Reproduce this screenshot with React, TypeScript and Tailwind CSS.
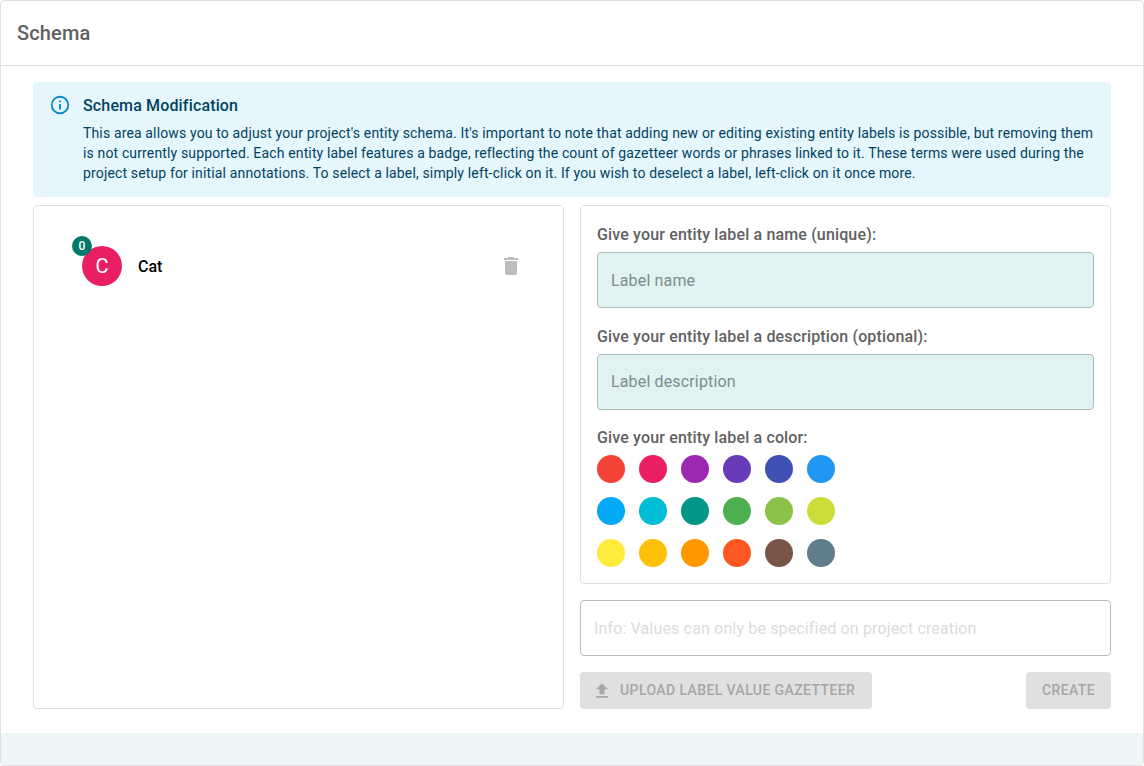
import React from "react";

const swatches = [
  "#f44336", "#e91e63", "#9c27b0", "#673ab7", "#3f51b5", "#2196f3",
  "#03a9f4", "#00bcd4", "#009688", "#4caf50", "#8bc34a", "#cddc39",
  "#ffeb3b", "#ffc107", "#ff9800", "#ff5722", "#795548", "#607d8b",
];

function Swatch({ color }: { color: string }) {
  return <div className="w-7 h-7 rounded-full" style={{ backgroundColor: color }} />;
}

function FieldLabel({ children }: { children: React.ReactNode }) {
  return <div className="h-[21px] mb-[7px] text-[16px] leading-[21px] font-medium tracking-[0.15px] text-[#616161]">{children}</div>;
}

export default function App() {
  return (
    <div className="w-[1144px] h-[766px] bg-white border border-[#e0e0e0] rounded flex flex-col overflow-hidden font-['Roboto',sans-serif]">
      <header className="h-[65px] shrink-0 border-b border-[#e0e0e0] flex items-center px-4">
        <h1 className="text-[20px] font-medium tracking-[0.15px] text-[#616161]">Schema</h1>
      </header>

      <main className="flex-1 flex flex-col gap-2 px-8 pt-4">
        <div className="h-[115px] shrink-0 rounded bg-[#e5f6fd] text-[#014361] flex px-4">
          <svg viewBox="0 0 24 24" className="w-[22px] h-[22px] mt-[12px] mr-3 shrink-0 fill-[#0288d1]">
            <path d="M11,9H13V7H11M12,20C7.59,20 4,16.41 4,12C4,7.59 7.59,4 12,4C16.41,4 20,7.59 20,12C20,16.41 16.41,20 12,20M12,2A10,10 0 0,0 2,12A10,10 0 0,0 12,22A10,10 0 0,0 22,12A10,10 0 0,0 12,2M11,17H13V11H11V17Z" />
          </svg>
          <div className="pt-3">
            <div className="text-[16px] leading-6 font-medium tracking-[0.15px] mb-[5px]">Schema Modification</div>
            <p className="text-[14px] leading-5 tracking-[0.145px]">
              This area allows you to adjust your project's entity schema. It's important to note that adding new or editing existing entity labels is possible, but removing them is not currently supported. Each entity label features a badge, reflecting the count of gazetteer words or phrases linked to it. These terms were used during the project setup for initial annotations. To select a label, simply left-click on it. If you wish to deselect a label, left-click on it once more.
            </p>
          </div>
        </div>

        <div className="grid grid-cols-2 gap-4">
          <section className="h-[504px] rounded border border-[#e0e0e0] pt-10 pl-12 pr-[40px]">
            <div className="flex items-center">
              <div className="relative w-10 h-10 rounded-full bg-[#e91e63] text-white text-[20px] flex items-center justify-center">
                C
                <span className="absolute -left-[10px] -top-[10px] w-5 h-5 pb-px rounded-full bg-[#00796b] text-white text-[12px] font-medium flex items-center justify-center">
                  0
                </span>
              </div>
              <span className="ml-4 pt-px text-[16px] font-medium text-black">Cat</span>
              <svg viewBox="0 0 24 24" className="w-6 h-6 ml-auto fill-[#bdbdbd]">
                <path d="M6 19c0 1.1.9 2 2 2h8c1.1 0 2-.9 2-2V7H6v12zM19 4h-3.5l-1-1h-5l-1 1H5v2h14V4z" />
              </svg>
            </div>
          </section>

          <section className="flex flex-col">
            <div className="h-[379px] rounded border border-[#e0e0e0] pt-[18px] px-4 flex flex-col gap-[18px]">
              <div className="flex flex-col">
                <FieldLabel>Give your entity label a name (unique):</FieldLabel>
                <div className="h-14 rounded border border-[#a9bfbd] bg-[#e0f2f1] flex items-center px-[13px] pt-px text-[16px] tracking-[0.15px] text-[#7f8c8b]">
                  Label name
                </div>
              </div>
              <div className="flex flex-col">
                <FieldLabel>Give your entity label a description (optional):</FieldLabel>
                <div className="h-14 rounded border border-[#a9bfbd] bg-[#e0f2f1] flex items-center px-[13px] text-[16px] tracking-[0.15px] text-[#7f8c8b]">
                  Label description
                </div>
              </div>
              <div className="-mt-[1px]">
                <FieldLabel>Give your entity label a color:</FieldLabel>
                <div className="grid grid-cols-[repeat(6,28px)] gap-x-[14px] gap-y-[14px]">
                  {swatches.map((c) => (
                    <Swatch key={c} color={c} />
                  ))}
                </div>
              </div>
            </div>

            <div className="h-14 mt-4 rounded border border-[#bdbdbd] flex items-center px-[13px] pt-px text-[16px] tracking-[0.15px] text-[#dcdcdc]">
              Info: Values can only be specified on project creation
            </div>

            <div className="flex justify-between mt-4">
              <div className="h-[37px] w-[292px] rounded bg-[#e0e0e0] text-[#a6a6a6] text-[14px] leading-[24.5px] font-medium tracking-[0.4px] flex items-center pl-3">
                <svg viewBox="0 0 24 24" className="w-5 h-5 mr-2 fill-[#a6a6a6]">
                  <path d="M9 16h6v-6h4l-7-7-7 7h4zm-4 2h14v2H5z" />
                </svg>
                UPLOAD LABEL VALUE GAZETTEER
              </div>
              <div className="h-[37px] w-[85px] rounded bg-[#e0e0e0] text-[#a6a6a6] text-[14px] leading-[24.5px] font-medium tracking-[0.4px] flex items-center justify-center">
                CREATE
              </div>
            </div>
          </section>
        </div>
      </main>

      <footer className="h-8 shrink-0 bg-[#eef6f8]" />
    </div>
  );
}
